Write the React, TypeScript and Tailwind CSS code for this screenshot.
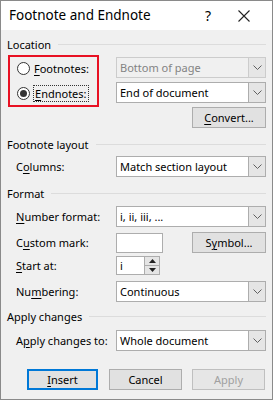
import React from 'react';

const font = { fontFamily: '"Segoe UI", "Noto Sans", "Open Sans", sans-serif' };

const Chevron = () => (
  <svg width="9" height="5" viewBox="0 0 9 5" className="block">
    <path d="M0.5 0.5 L4.5 4.5 L8.5 0.5" fill="none" stroke="#606060" strokeWidth="1" />
  </svg>
);

// letter with an access-key underline
const U: React.FC<{ children: React.ReactNode }> = ({ children }) => (
  <span className="underline underline-offset-2 decoration-1">{children}</span>
);

const Select: React.FC<{ value: string; disabled?: boolean }> = ({ value, disabled }) => (
  <div
    className={`flex h-[21px] w-[150px] border ${
      disabled ? 'border-[#cccccc] bg-[#f0f0f0] text-[#838383]' : 'border-[#adadad] bg-white text-black'
    }`}
  >
    <div className="flex flex-1 items-center pl-[3px] leading-none">{value}</div>
    <div
      className={`flex w-[17px] items-center justify-center border-l ${
        disabled ? 'border-[#cccccc] bg-[#e6e6e6]' : 'border-[#adadad] bg-[#e5e5e5]'
      }`}
    >
      <Chevron />
    </div>
  </div>
);

const Button: React.FC<{ children: React.ReactNode; w: string; primary?: boolean; disabled?: boolean }> = ({
  children,
  w,
  primary,
  disabled,
}) => (
  <div
    className={`flex h-[21px] items-center justify-center leading-none ${w} ${
      primary ? 'border-2 border-[#0078d7]' : disabled ? 'border border-[#bfbfbf]' : 'border border-[#adadad]'
    } ${disabled ? 'bg-[#e6e6e6] text-[#a0a0a0]' : 'bg-[#e1e1e1] text-black'}`}
  >
    {children}
  </div>
);

const Header: React.FC<{ title: string; mt: string }> = ({ title, mt }) => (
  <div className={`flex h-[16px] items-center ${mt}`}>
    <span className="leading-none">{title}</span>
    <div className="ml-[7px] h-px flex-1 bg-[#dcdcdc]" />
  </div>
);

const Row: React.FC<{ label: React.ReactNode; mt: string; children: React.ReactNode }> = ({ label, mt, children }) => (
  <div className={`flex items-center ${mt}`}>
    <div className="w-[109px] pl-[9px] leading-none">{label}</div>
    {children}
  </div>
);

const Radio: React.FC<{ checked?: boolean }> = ({ checked }) => (
  <div className="flex h-[13px] w-[13px] items-center justify-center rounded-full border border-[#333333] bg-white">
    {checked && <div className="h-[7px] w-[7px] rounded-full bg-[#333333]" />}
  </div>
);

export default function App() {
  return (
    <div className="h-[400px] w-[273px] overflow-hidden border border-[#8a8a8a] bg-[#f0f0f0] text-[11px] text-black" style={font}>
      {/* Title bar */}
      <div className="flex h-[29px] items-center bg-white">
        <span className="ml-[8px] text-[13.5px] leading-none">Footnote and Endnote</span>
        <span className="ml-auto mr-[27px] text-[14px] leading-none">?</span>
        <svg width="12" height="12" viewBox="0 0 12 12" className="mr-[22px]">
          <path d="M0.5 0.5 L11.5 11.5 M11.5 0.5 L0.5 11.5" stroke="#222" strokeWidth="1.1" />
        </svg>
      </div>

      <div className="px-[6px]">
        <Header title="Location" mt="mt-[6px]" />
        <div className="mt-[3px] flex items-start">
          <div className="ml-px h-[52px] w-[91px] border-2 border-[#e81123] pt-px">
            <div className="flex h-[20px] items-center pl-[7px]">
              <Radio />
              <span className="ml-[4px] leading-none">
                <U>F</U>ootnotes:
              </span>
            </div>
            <div className="mt-[5px] flex h-[20px] items-center pl-[7px]">
              <Radio checked />
              <span className="ml-[3px] border border-dotted border-[#333] px-px py-[2px] leading-none">
                <U>E</U>ndnotes:
              </span>
            </div>
          </div>
          <div className="ml-auto mt-[2px] flex flex-col items-end gap-[4px]">
            <Select value="Bottom of page" disabled />
            <Select value="End of document" />
            <Button w="w-[74px]">
              <span>
                <U>C</U>onvert...
              </span>
            </Button>
          </div>
        </div>

        <Header title="Footnote layout" mt="mt-[8px]" />
        <Row
          mt="mt-[4px]"
          label={
            <>
              C<U>o</U>lumns:
            </>
          }
        >
          <Select value="Match section layout" />
        </Row>

        <Header title="Format" mt="mt-[8px]" />
        <Row
          mt="mt-[5px]"
          label={
            <>
              <U>N</U>umber format:
            </>
          }
        >
          <Select value="i, ii, iii, ..." />
        </Row>
        <Row
          mt="mt-[5px]"
          label={
            <>
              C<U>u</U>stom mark:
            </>
          }
        >
          <div className="h-[20px] w-[47px] border border-[#adadad] bg-white" />
          <div className="ml-auto">
            <Button w="w-[74px]">
              <span>
                S<U>y</U>mbol...
              </span>
            </Button>
          </div>
        </Row>
        <Row
          mt="mt-[3px]"
          label={
            <>
              <U>S</U>tart at:
            </>
          }
        >
          <div className="flex h-[19px] w-[44px] border border-[#adadad] bg-white">
            <div className="flex flex-1 items-center pl-[3px] leading-none">i</div>
            <div className="flex w-[15px] flex-col border-l border-[#adadad] bg-[#e5e5e5]">
              <div className="flex flex-1 items-center justify-center border-b border-[#adadad]">
                <svg width="7" height="4" viewBox="0 0 7 4">
                  <path d="M0 4 L3.5 0 L7 4 Z" fill="#222" />
                </svg>
              </div>
              <div className="flex flex-1 items-center justify-center">
                <svg width="7" height="4" viewBox="0 0 7 4">
                  <path d="M0 0 L3.5 4 L7 0 Z" fill="#222" />
                </svg>
              </div>
            </div>
          </div>
        </Row>
        <Row
          mt="mt-[6px]"
          label={
            <>
              Nu<U>m</U>bering:
            </>
          }
        >
          <Select value="Continuous" />
        </Row>

        <Header title="Apply changes" mt="mt-[6px]" />
        <Row
          mt="mt-[6px]"
          label={
            <>
              A<U>p</U>ply changes to:
            </>
          }
        >
          <Select value="Whole document" />
        </Row>

        <div className="mt-[18px] flex">
          <div className="ml-[20px]">
            <Button w="w-[71px]" primary>
              <span>
                <U>I</U>nsert
              </span>
            </Button>
          </div>
          <div className="ml-[11px]">
            <Button w="w-[73px]">Cancel</Button>
          </div>
          <div className="ml-[10px]">
            <Button w="w-[73px]" disabled>
              Apply
            </Button>
          </div>
        </div>
      </div>
    </div>
  );
}
